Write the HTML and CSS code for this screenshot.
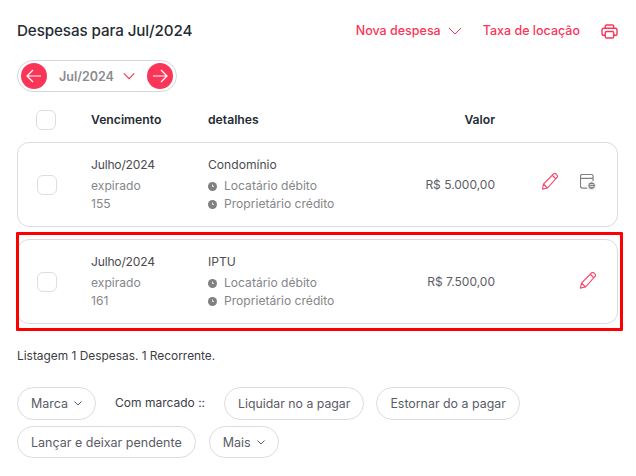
FILE: index.html
```html
<!DOCTYPE html>
<html lang="pt">
<head>
<meta charset="utf-8">
<title>Despesas</title>
<link rel="stylesheet" href="styles.css">
</head>
<body>
<main class="page">
  <header class="top">
    <h1 class="title">Despesas para Jul/2024</h1>
    <div class="top-actions">
      <a class="link link-menu">Nova despesa
        <svg class="chev-lg" viewBox="0 0 14 8"><path d="M1 1l6 6 6-6"/></svg>
      </a>
      <a class="link">Taxa de locação</a>
      <svg class="printer" viewBox="0 0 18 16"><path d="M4.500 4V2.500Q4.500 1 6 1h6q1.500 0 1.500 1.500V4M4.500 12H3Q1 12 1 10V6.500Q1 4.500 3 4.500h12q2 0 2 2V10q0 2-2 2h-1.500"/><rect x="4.500" y="8" width="9" height="7" rx="1.500"/></svg>
    </div>
  </header>

  <div class="month-pill">
    <button class="round"><svg viewBox="0 0 16 14"><path d="M15 7H1M7 1L1 7l6 6"/></svg></button>
    <span class="month">Jul/2024</span>
    <svg class="chev-md" viewBox="0 0 14 8"><path d="M1 1l6 6 6-6"/></svg>
    <button class="round"><svg viewBox="0 0 16 14"><path d="M1 7h14M9 1l6 6-6 6"/></svg></button>
  </div>

  <div class="grid head">
    <span class="check"></span>
    <span>Vencimento</span>
    <span>detalhes</span>
    <span class="amount">Valor</span>
  </div>

  <section class="card grid">
    <span class="check"></span>
    <div class="stack">
      <span class="strong date">Julho/2024</span>
      <span>expirado</span>
      <span>155</span>
    </div>
    <div class="stack">
      <span class="strong">Condomínio</span>
      <span class="status"><svg class="dot" viewBox="0 0 9 9"><circle cx="4.500" cy="4.500" r="4.500"/><path d="M4.500 2.500v2h1.500"/></svg>Locatário débito</span>
      <span class="status"><svg class="dot" viewBox="0 0 9 9"><circle cx="4.500" cy="4.500" r="4.500"/><path d="M4.500 2.500v2h1.500"/></svg>Proprietário crédito</span>
    </div>
    <span class="amount value">R$ 5.000,00</span>
    <div class="tools">
      <svg class="pencil pencil-up" viewBox="1 1 16 16"><path d="M1.500 16.500l1-5L12.500 1.500q1-1 2.200-.2l1.500 1.500q.8 1.200-.2 2.200L6.500 15.500zM2.500 11.500l4 4M11.500 3l3.500 3.500"/></svg>
      <svg class="calendar" viewBox="0.500 0.500 16.500 16.500"><path d="M8 15H3Q1 15 1 13V3Q1 1 3 1h9q2 0 2 2v5M1 5h13"/><circle cx="12.500" cy="12.500" r="4" class="filled"/><path d="M10.500 11.500h4M14.500 13.500h-4" class="cut"/></svg>
    </div>
  </section>

  <div class="highlight">
    <section class="card grid">
      <span class="check"></span>
      <div class="stack">
        <span class="strong date">Julho/2024</span>
        <span>expirado</span>
        <span>161</span>
      </div>
      <div class="stack">
        <span class="strong">IPTU</span>
        <span class="status"><svg class="dot" viewBox="0 0 9 9"><circle cx="4.500" cy="4.500" r="4.500"/><path d="M4.500 2.500v2h1.500"/></svg>Locatário débito</span>
        <span class="status"><svg class="dot" viewBox="0 0 9 9"><circle cx="4.500" cy="4.500" r="4.500"/><path d="M4.500 2.500v2h1.500"/></svg>Proprietário crédito</span>
      </div>
      <span class="amount value">R$ 7.500,00</span>
      <div class="tools">
        <svg class="pencil" viewBox="1 1 16 16"><path d="M1.500 16.500l1-5L12.500 1.500q1-1 2.200-.2l1.500 1.500q.8 1.200-.2 2.200L6.500 15.500zM2.500 11.500l4 4M11.500 3l3.500 3.500"/></svg>
      </div>
    </section>
  </div>

  <p class="summary">Listagem 1 Despesas. 1 Recorrente.</p>

  <div class="actions">
    <button class="btn">Marca <svg class="chev-sm" viewBox="0 0 8 5"><path d="M.5.500L4 4 7.500.500"/></svg></button>
    <span class="with-marked">Com marcado ::</span>
    <button class="btn btn-tight">Liquidar no a pagar</button>
    <button class="btn btn-narrow">Estornar do a pagar</button>
    <button class="btn btn-low">Lançar e deixar pendente</button>
    <button class="btn btn-low btn-more">Mais <svg class="chev-sm" viewBox="0 0 8 5"><path d="M.5.500L4 4 7.500.500"/></svg></button>
  </div>
</main>
</body>
</html>
```
FILE: styles.css
```css
* { box-sizing: border-box; }
html, body { margin: 0; background: #fff; }
body { font-family: Inter, "Noto Sans", sans-serif; color: #2b3038; overflow: hidden; }
.page { width: 636px; height: 476px; padding: 20px 18px 0 17px; }
svg { fill: none; stroke: currentColor; display: block; }

.top { display: flex; justify-content: space-between; align-items: center; height: 21px; }
.title { margin: 0; font-size: 15.200px; font-weight: 500; color: #252b33; letter-spacing: -.1px; }
.top-actions { display: flex; align-items: center; color: #fb3558; }
.link { font-size: 12.500px; font-weight: 500; }
.link-menu { display: flex; align-items: center; gap: 7px; margin-right: 21px; }
.chev-lg { width: 14px; height: 8px; stroke-width: 1; }
.printer { width: 17px; height: 15px; margin: 1px 0 0 21px; stroke-width: 1.500; }

.month-pill { display: flex; align-items: center; width: 160px; height: 32px; margin-top: 19px; padding: 0 3px; border: 1px solid #d8d8d8; border-radius: 16px; }
.round { flex: none; width: 26px; height: 26px; padding: 0; border: 0; border-radius: 50%; background: #fb3558; color: #fff; display: flex; align-items: center; justify-content: center; }
.round svg { width: 16px; height: 14px; stroke-width: 1.200; }
.month { margin-left: 12px; font-size: 12.500px; font-weight: 600; color: #8a8a8e; }
.chev-md { width: 14px; height: 8px; margin: 0 12px 0 9px; color: #fb3558; stroke-width: 1.300; }

.grid { display: grid; grid-template-columns: 74px 117px 187px 100px 1fr; align-items: center; }
.head { height: 24px; margin-top: 15px; font-size: 12.200px; font-weight: 600; color: #252b33; }
.amount { text-align: right; white-space: nowrap; }
.check { width: 20px; height: 20px; margin-left: 19px; border: 1px solid #dedede; border-radius: 6px; background: #fff; }
.head .check { margin-top: 2px; }

.card { width: 601px; height: 85px; margin-top: 11px; border: 1px solid #dcdcdc; border-radius: 12px; font-size: 12.100px; color: #85868a; grid-template-columns: 73px 117px 187px 100px 1fr; }
.stack { display: flex; flex-direction: column; line-height: 18.500px; margin-top: 1px; }
.strong { color: #4a4c50; margin-bottom: 2px; }
.date { letter-spacing: -.2px; }
.status { display: flex; align-items: center; gap: 7px; }
.dot { width: 9px; height: 9px; fill: #808080; stroke: none; }
.dot path { fill: none; stroke: #fff; stroke-width: .8; }
.value { color: #5b5e64; font-size: 12px; }
.tools { display: flex; align-items: center; justify-content: flex-end; gap: 22px; padding-right: 21px; }
.pencil { width: 16px; height: 17px; color: #f8466c; stroke-width: 1.100; margin-top: -2px; }
.pencil-up { margin-top: -6px; }
.calendar { width: 16px; height: 16px; color: #808080; stroke-width: 1.200; margin-top: -5px; }
.calendar .filled { fill: #808080; stroke: #fff; stroke-width: 1; }
.calendar .cut { stroke: #fff; stroke-width: .8; }

.highlight { position: relative; }
.highlight .card { margin-top: 12px; }
.highlight::after { content: ""; position: absolute; left: -1px; top: -7px; bottom: -7px; width: 601px; border: 3px solid #f00; border-radius: 1px; pointer-events: none; }

.summary { margin: 25px 0 0; font-size: 11.900px; color: #3b3e44; height: 14px; line-height: 14px; }

.actions { display: flex; flex-wrap: wrap; align-items: center; margin-top: 24px; row-gap: 6px; width: 530px; }
.btn { display: inline-flex; align-items: center; justify-content: center; gap: 6px; height: 33px; padding: 0 13px; border: 1px solid #dcdcdc; border-radius: 17px; background: #fff; font-family: inherit; font-size: 12.500px; color: #5a5c66; margin-right: 13px; }
.btn-tight { font-size: 12.300px; margin-right: 12px; }
.btn-narrow { font-size: 12.400px; }
.btn-low { height: 32px; }
.btn-more { margin-right: 0; }
.with-marked { margin-right: 19px; margin-left: 6px; margin-top: -2px; font-size: 12px; color: #3d4046; }
.chev-sm { width: 8px; height: 5px; stroke-width: 1; }
```
